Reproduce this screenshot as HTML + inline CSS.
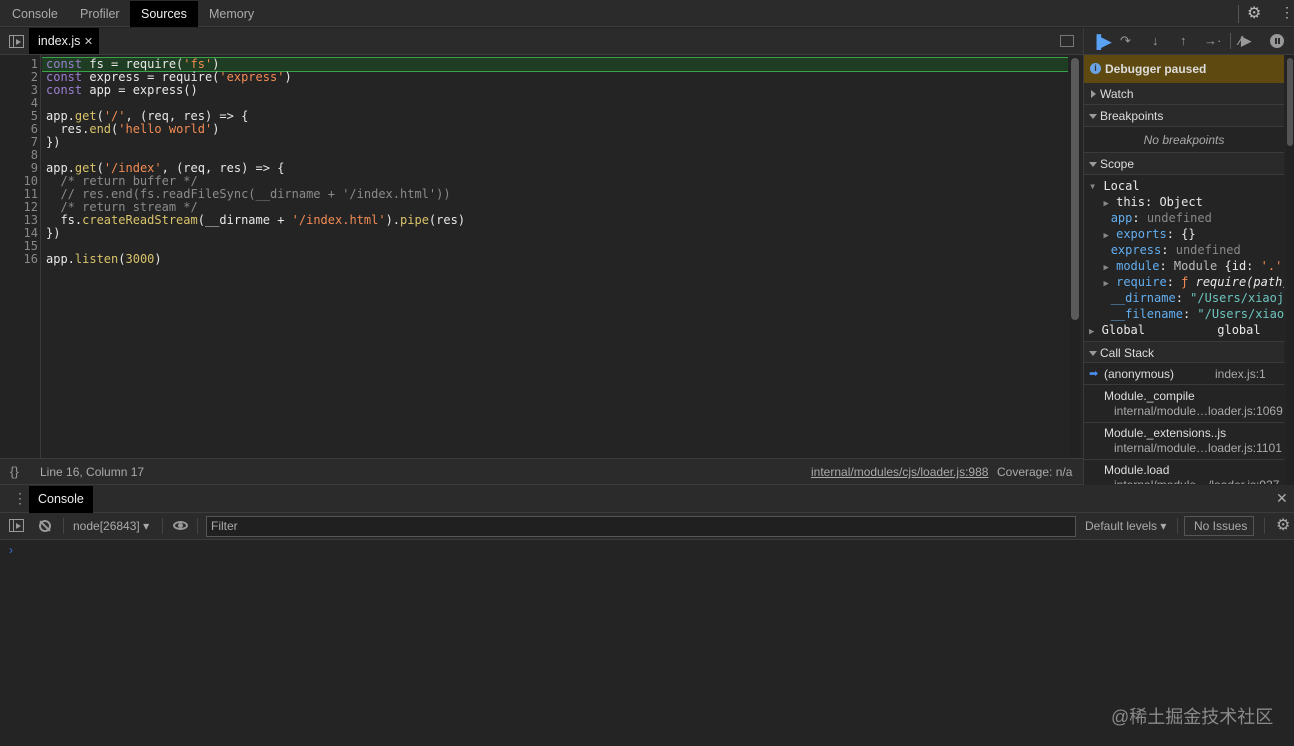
<!DOCTYPE html>
<html><head><style>
*{margin:0;padding:0;box-sizing:border-box}
body{width:1294px;height:746px;background:#242424;font-family:"Liberation Sans",sans-serif;font-size:12px;color:#ccc;position:relative;overflow:hidden}
.abs{position:absolute}
.mono{font-family:"DejaVu Sans Mono","Liberation Mono",monospace;font-size:12px}
.code div{height:13px;line-height:13px;white-space:pre}
.k{color:#9a7fd1}.s{color:#f28b54}.f{color:#d9c36a}.c{color:#8b8b8b}.n{color:#c8b868}.t{color:#e8e8e8}
.sb{position:absolute;left:1084px;width:200px;border-bottom:1px solid #3a3a3a;background:#2a2a2a;height:22px;line-height:22px;padding-left:16px;color:#ddd}
.sb:before{content:"";position:absolute;left:5px;top:8px;border:4px solid transparent}
.dn:before{border-top:5px solid #999;top:9px}
.rt:before{border-left:5px solid #999;left:7px;top:7px}
.sc div{height:16px;line-height:16px;white-space:pre}
.p{color:#62aef0}.g{color:#888}
</style></head><body>
<div class="abs" style="left:0;top:0;width:1294px;height:27px;background:#2b2b2b;border-bottom:1px solid #3c3c3c"></div>
<div class="abs" style="left:12px;top:7px;color:#aaa;font-size:12.5px">Console</div>
<div class="abs" style="left:80px;top:7px;color:#aaa;font-size:12.5px">Profiler</div>
<div class="abs" style="left:130px;top:1px;width:68px;height:26px;background:#000"></div>
<div class="abs" style="left:141px;top:7px;color:#eee;font-size:12.5px">Sources</div>
<div class="abs" style="left:209px;top:7px;color:#aaa;font-size:12.5px">Memory</div>
<div class="abs" style="left:1238px;top:5px;width:1px;height:18px;background:#555"></div>
<div class="abs" style="left:1247px;top:3px;color:#bbb;font-size:16px">⚙</div>
<div class="abs" style="left:1280px;top:4px;color:#bbb;font-size:14px">⋮</div>
<div class="abs" style="left:0;top:28px;width:1084px;height:27px;background:#2b2b2b;border-bottom:1px solid #3c3c3c"></div>
<div class="abs" style="left:9px;top:35px;width:15px;height:13px;border:1px solid #999"></div>
<div class="abs" style="left:13px;top:35px;width:1px;height:13px;background:#999"></div>
<div class="abs" style="left:16px;top:39px;border-left:5px solid #999;border-top:3px solid transparent;border-bottom:3px solid transparent"></div>
<div class="abs" style="left:29px;top:28px;width:70px;height:26px;background:#000"></div>
<div class="abs" style="left:38px;top:34px;color:#eee;font-size:12.5px">index.js <span style="font-size:11px;color:#ccc">✕</span></div>
<div class="abs" style="left:1060px;top:35px;width:14px;height:12px;border:1px solid #777"></div>
<div class="abs" style="left:0;top:55px;width:41px;height:403px;background:#232323;border-right:1px solid #3a3a3a"></div>
<div class="abs" style="left:42px;top:57px;width:1026px;height:15px;background:#1f3d22;border-top:1px solid #3aa34a;border-bottom:1px solid #3aa34a"></div>
<div class="abs" style="left:1070px;top:57px;width:10px;height:400px;background:#222"></div>
<div class="abs" style="left:1071px;top:58px;width:8px;height:262px;background:#5a5a5a;border-radius:4px"></div>
<div class="abs mono code" style="left:0;top:58px;width:38px;text-align:right;color:#888">
<div>1</div><div>2</div><div>3</div><div>4</div><div>5</div><div>6</div><div>7</div><div>8</div><div>9</div><div>10</div><div>11</div><div>12</div><div>13</div><div>14</div><div>15</div><div>16</div></div>
<div class="abs mono code t" style="left:46px;top:58px">
<div><span class="k">const</span> fs = require(<span class="s">'fs'</span>)</div>
<div><span class="k">const</span> express = require(<span class="s">'express'</span>)</div>
<div><span class="k">const</span> app = express()</div>
<div> </div>
<div>app.<span class="f">get</span>(<span class="s">'/'</span>, (req, res) =&gt; {</div>
<div>  res.<span class="f">end</span>(<span class="s">'hello world'</span>)</div>
<div>})</div>
<div> </div>
<div>app.<span class="f">get</span>(<span class="s">'/index'</span>, (req, res) =&gt; {</div>
<div class="c">  /* return buffer */</div>
<div class="c">  // res.end(fs.readFileSync(__dirname + '/index.html'))</div>
<div class="c">  /* return stream */</div>
<div>  fs.<span class="f">createReadStream</span>(__dirname + <span class="s">'/index.html'</span>).<span class="f">pipe</span>(res)</div>
<div>})</div>
<div> </div>
<div>app.<span class="f">listen</span>(<span class="f">3000</span>)</div>
</div>
<div class="abs" style="left:0;top:458px;width:1084px;height:27px;background:#2b2b2b;border-top:1px solid #3c3c3c;border-bottom:1px solid #3c3c3c"></div>
<div class="abs" style="left:10px;top:464px;color:#999;font-size:13px">{}</div>
<div class="abs" style="left:40px;top:465px;color:#aaa">Line 16, Column 17</div>
<div class="abs" style="left:811px;top:465px;color:#aaa;text-decoration:underline">internal/modules/cjs/loader.js:988</div>
<div class="abs" style="left:997px;top:465px;color:#aaa">Coverage: n/a</div>
<div class="abs" style="left:1083px;top:28px;width:1px;height:457px;background:#3c3c3c"></div>
<div class="abs" style="left:1084px;top:28px;width:210px;height:27px;background:#2b2b2b;border-bottom:1px solid #3c3c3c"></div>
<div class="abs" style="left:1092px;top:34px;color:#5aa2f5;font-size:13px;font-weight:bold">▐▶</div>
<div class="abs" style="left:1120px;top:33px;color:#999;font-size:13px">↷</div>
<div class="abs" style="left:1152px;top:33px;color:#999;font-size:13px">↓</div>
<div class="abs" style="left:1180px;top:33px;color:#999;font-size:13px">↑</div>
<div class="abs" style="left:1204px;top:33px;color:#999;font-size:13px">→·</div>
<div class="abs" style="left:1230px;top:33px;width:1px;height:16px;background:#555"></div>
<div class="abs" style="left:1239px;top:33px;color:#999;font-size:13px;font-weight:bold">⁄▶</div>
<div class="abs" style="left:1270px;top:34px;width:14px;height:14px;border-radius:7px;background:#999"></div>
<div class="abs" style="left:1275px;top:38px;width:1.5px;height:6px;background:#2b2b2b;box-shadow:3px 0 #2b2b2b"></div>
<div class="abs" style="left:1084px;top:55px;width:200px;height:28px;background:#5e4a10"></div>
<div class="abs" style="left:1090px;top:63px;width:11px;height:11px;border-radius:6px;background:#6aa4e6;color:#333;font-size:9px;font-weight:bold;text-align:center;line-height:11px">i</div>
<div class="abs" style="left:1105px;top:62px;color:#ddd;font-weight:bold;font-size:12px">Debugger paused</div>
<div class="sb rt" style="top:83px">Watch</div>
<div class="sb dn" style="top:105px">Breakpoints</div>
<div class="abs" style="left:1084px;top:127px;width:200px;height:26px;line-height:26px;text-align:center;font-style:italic;color:#aaa;border-bottom:1px solid #3a3a3a;background:#242424">No breakpoints</div>
<div class="sb dn" style="top:153px">Scope</div>
<div class="abs mono sc t" style="left:1089px;top:178px;width:195px;overflow:hidden">
<div><span class="g">▾</span> Local</div>
<div>  <span class="g" style="font-size:9px">▶</span> this: Object</div>
<div>   <span class="p">app</span>: <span class="g">undefined</span></div>
<div>  <span class="g" style="font-size:9px">▶</span> <span class="p">exports</span>: {}</div>
<div>   <span class="p">express</span>: <span class="g">undefined</span></div>
<div>  <span class="g" style="font-size:9px">▶</span> <span class="p">module</span>: <span style="color:#bbb">Module</span> {id: <span class="s">'.'</span>,</div>
<div>  <span class="g" style="font-size:9px">▶</span> <span class="p">require</span>: <span class="s">ƒ</span> <i>require(path)</i></div>
<div>   <span class="p">__dirname</span>: <span style="color:#6cc4bd">"/Users/xiaoji</span></div>
<div>   <span class="p">__filename</span>: <span style="color:#6cc4bd">"/Users/xiaoj</span></div>
<div><span class="g" style="font-size:9px">▶</span> Global          global</div>
</div>
<div class="sb dn" style="top:341px;border-top:1px solid #3a3a3a">Call Stack</div>
<div class="abs" style="left:1084px;top:363px;width:200px;height:22px;border-bottom:1px solid #3a3a3a"></div>
<div class="abs" style="left:1089px;top:367px;color:#4a8cf0;font-size:11px">➡</div>
<div class="abs" style="left:1104px;top:367px;color:#ddd">(anonymous)</div>
<div class="abs" style="left:1215px;top:367px;color:#aaa">index.js:1</div>
<div class="abs" style="left:1104px;top:389px;color:#ddd">Module._compile</div>
<div class="abs" style="left:1114px;top:404px;color:#aaa">internal/module…loader.js:1069</div>
<div class="abs" style="left:1084px;top:422px;width:200px;height:1px;background:#3a3a3a"></div>
<div class="abs" style="left:1104px;top:426px;color:#ddd">Module._extensions..js</div>
<div class="abs" style="left:1114px;top:441px;color:#aaa">internal/module…loader.js:1101</div>
<div class="abs" style="left:1084px;top:459px;width:200px;height:1px;background:#3a3a3a"></div>
<div class="abs" style="left:1104px;top:463px;color:#ddd">Module.load</div>
<div class="abs" style="left:1114px;top:478px;color:#aaa;height:6px;overflow:hidden">internal/module…/loader.js:937</div>
<div class="abs" style="left:1286px;top:55px;width:8px;height:430px;background:#222"></div>
<div class="abs" style="left:1287px;top:58px;width:6px;height:88px;background:#555;border-radius:3px"></div>
<div class="abs" style="left:0;top:485px;width:1294px;height:28px;background:#2b2b2b;border-bottom:1px solid #3c3c3c"></div>
<div class="abs" style="left:13px;top:490px;color:#999;font-size:14px">⋮</div>
<div class="abs" style="left:29px;top:486px;width:64px;height:27px;background:#000"></div>
<div class="abs" style="left:38px;top:492px;color:#eee;font-size:12.5px">Console</div>
<div class="abs" style="left:1276px;top:490px;color:#aaa;font-size:14px">✕</div>
<div class="abs" style="left:0;top:513px;width:1294px;height:27px;background:#2b2b2b;border-bottom:1px solid #3c3c3c"></div>
<div class="abs" style="left:9px;top:519px;width:15px;height:13px;border:1px solid #999"></div>
<div class="abs" style="left:13px;top:519px;width:1px;height:13px;background:#999"></div>
<div class="abs" style="left:16px;top:523px;border-left:5px solid #999;border-top:3px solid transparent;border-bottom:3px solid transparent"></div>
<div class="abs" style="left:39px;top:520px;width:12px;height:12px;border:2px solid #999;border-radius:6px"></div>
<div class="abs" style="left:44px;top:519px;width:2px;height:14px;background:#999;transform:rotate(-45deg)"></div>
<div class="abs" style="left:63px;top:518px;width:1px;height:16px;background:#444"></div>
<div class="abs" style="left:73px;top:519px;color:#aaa">node[26843] ▾</div>
<div class="abs" style="left:162px;top:518px;width:1px;height:16px;background:#444"></div>
<div class="abs" style="left:173px;top:521px;width:15px;height:9px;border:2px solid #999;border-radius:50%"></div>
<div class="abs" style="left:178px;top:523px;width:5px;height:5px;background:#999;border-radius:3px"></div>
<div class="abs" style="left:197px;top:518px;width:1px;height:16px;background:#444"></div>
<div class="abs" style="left:206px;top:516px;width:870px;height:21px;border:1px solid #555;background:#202020"></div>
<div class="abs" style="left:211px;top:519px;color:#aaa">Filter</div>
<div class="abs" style="left:1085px;top:519px;color:#aaa">Default levels ▾</div>
<div class="abs" style="left:1177px;top:518px;width:1px;height:16px;background:#444"></div>
<div class="abs" style="left:1184px;top:516px;width:70px;height:20px;border:1px solid #555"></div>
<div class="abs" style="left:1194px;top:519px;color:#aaa">No Issues</div>
<div class="abs" style="left:1264px;top:518px;width:1px;height:16px;background:#444"></div>
<div class="abs" style="left:1276px;top:515px;color:#aaa;font-size:16px">⚙</div>
<div class="abs" style="left:9px;top:543px;color:#3a6fd8;font-size:12px">›</div>
<div class="abs" style="left:1111px;top:703px;color:#8a8a8a;font-size:18px;font-family:'Liberation Sans','Noto Sans CJK SC',sans-serif">@稀土掘金技术社区</div>
</body></html>
